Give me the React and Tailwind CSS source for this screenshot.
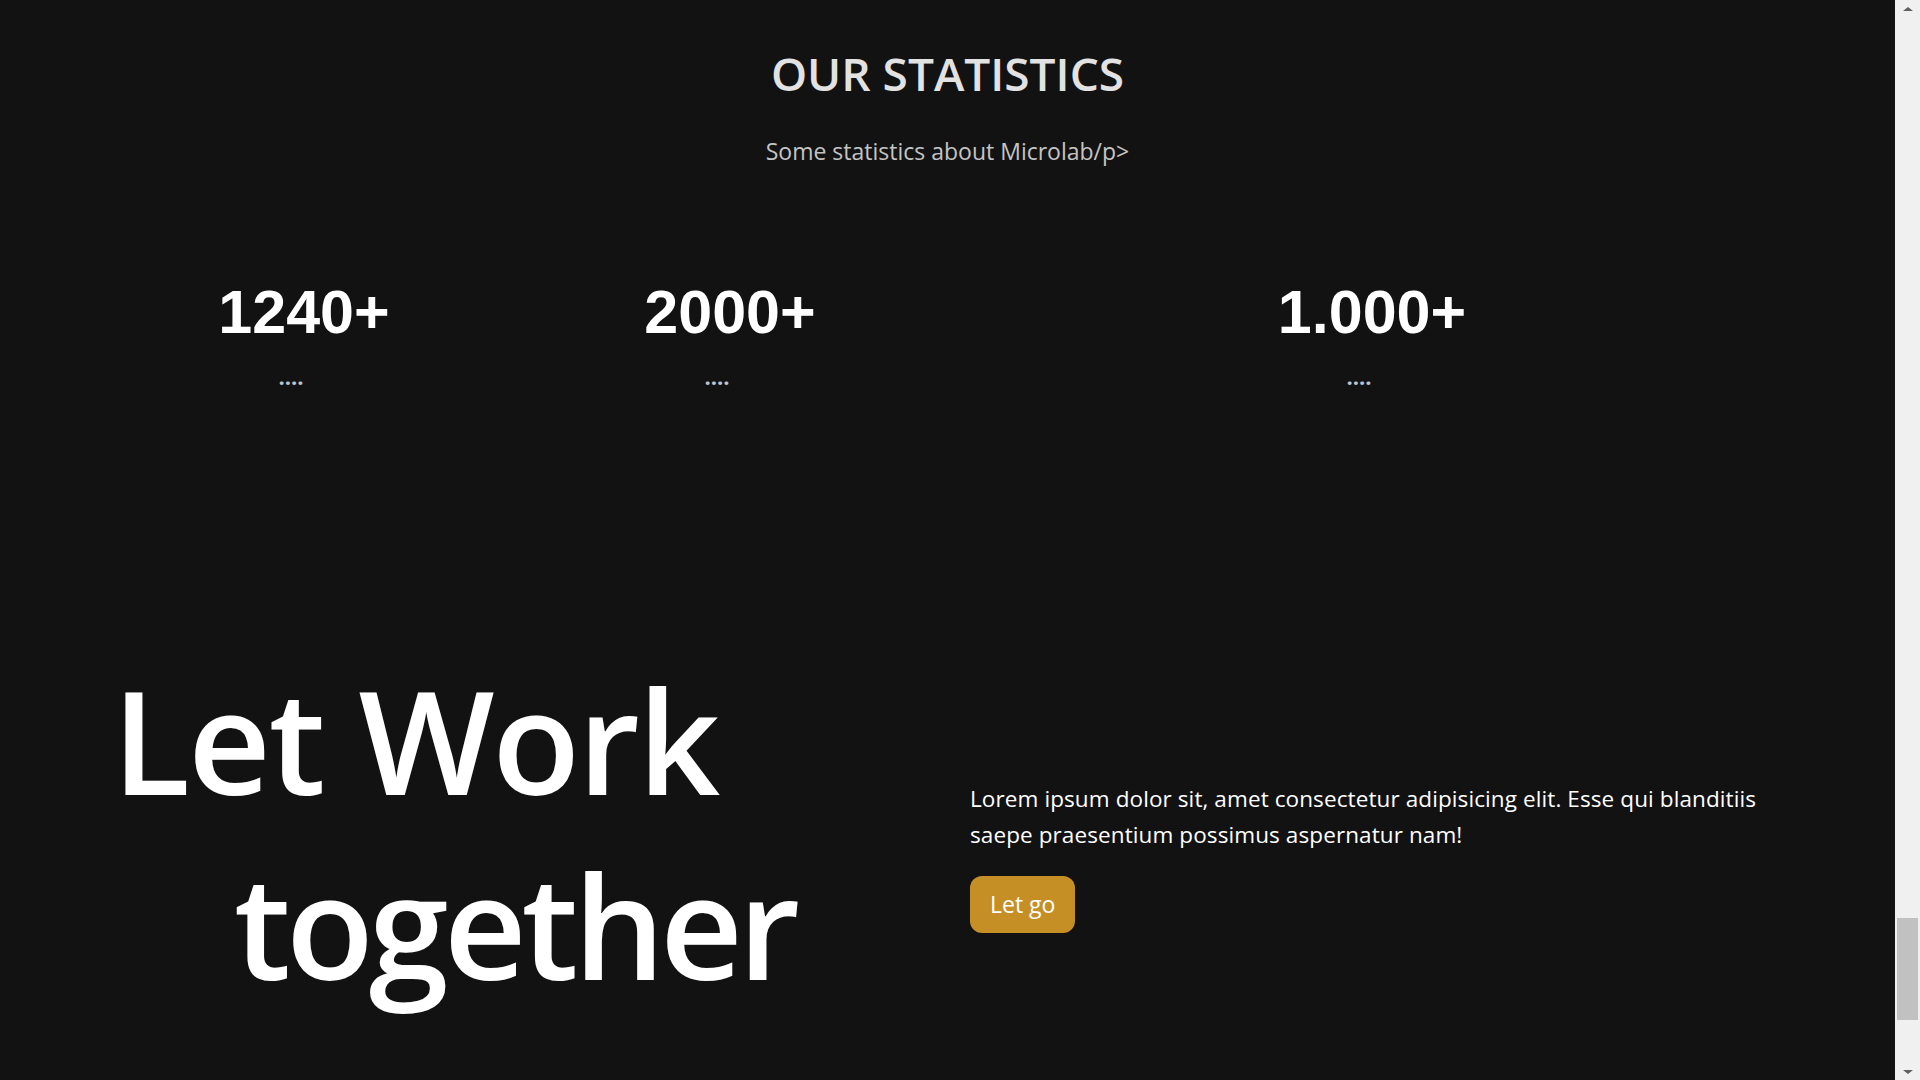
const stats = [
  { value: "1240+", label: "...." },
  { value: "2000+", label: "...." },
  { value: "", label: "" },
  { value: "1.000+", label: "...." },
];

const font = { fontFamily: '"Open Sans", "Noto Sans", sans-serif' };

function Scrollbar() {
  return (
    <aside className="w-[25px] h-full bg-[#f0f0f0] flex flex-col items-center">
      <div className="h-[17px] flex items-center justify-center">
        <div className="w-0 h-0 border-l-[5px] border-r-[5px] border-b-[4px] border-l-transparent border-r-transparent border-b-[#606060]" />
      </div>
      <div className="flex-1" />
      <div className="w-[21px] h-[102px] bg-[#c1c1c1]" />
      <div className="h-[43px]" />
      <div className="h-[17px] flex items-center justify-center">
        <div className="w-0 h-0 border-l-[5px] border-r-[5px] border-t-[4px] border-l-transparent border-r-transparent border-t-[#606060]" />
      </div>
    </aside>
  );
}

export default function App() {
  return (
    <div className="flex h-screen w-full overflow-hidden bg-[#121212]" style={font}>
      <main className="flex-1 flex flex-col text-white">
        {/* Statistics */}
        <section className="pt-[50px] flex flex-col items-center">
          <h2 className="text-[46px] leading-none font-semibold text-[#e2e2e2]">OUR STATISTICS</h2>
          <p className="mt-[44px] text-[23px] leading-none text-[#c4c4c4]">Some statistics about Microlab/p&gt;</p>
        </section>

        <section className="mt-[119px] pl-[78px] grid grid-cols-[426px_426px_216px_426px]">
          {stats.map((s, i) => (
            <div key={i} className="flex flex-col items-center">
              <div className="h-[61px] pl-[26px] text-[61px] leading-none font-bold font-['Liberation_Sans',Arial,sans-serif]">
                {s.value}
              </div>
              <div className="mt-[22px] h-[22px] text-[22px] leading-none font-bold text-[#bfc3cc]">{s.label}</div>
            </div>
          ))}
        </section>

        {/* Call to action */}
        <section className="mt-[260px] pl-[112px] flex">
          <h1 className="w-[858px] text-[144px] leading-[185px] font-semibold">
            <span className="tracking-[-2.3px]">Let Work</span>
            <br />
            <span className="pl-[122px] tracking-[-5px]">together</span>
          </h1>
          <div className="pt-[134px] w-[830px]">
            <p className="text-[22.5px] leading-[36px] tracking-[0.1px]">
              Lorem ipsum dolor sit, amet consectetur adipisicing elit. Esse qui blanditiis saepe praesentium possimus
              aspernatur nam!
            </p>
            <button className="mt-[23px] h-[57px] px-5 rounded-xl bg-[#c68f26] text-white text-[23px]">Let go</button>
          </div>
        </section>
      </main>
      <Scrollbar />
    </div>
  );
}
